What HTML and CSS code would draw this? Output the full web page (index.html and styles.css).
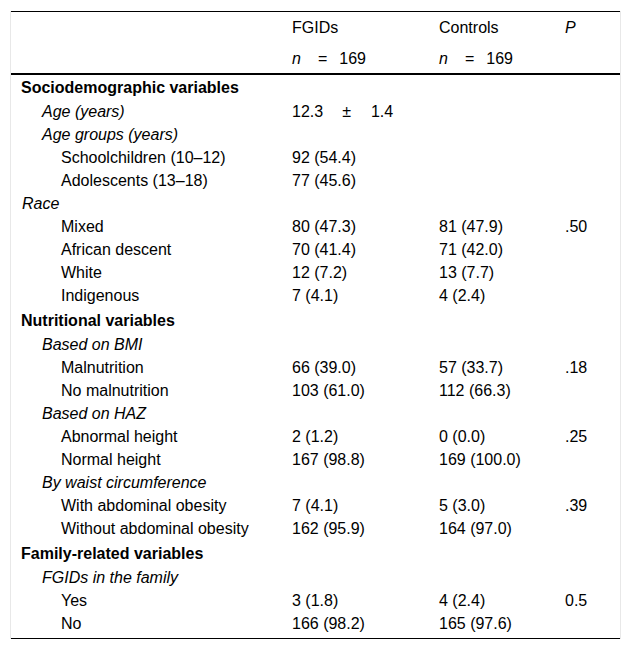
FILE: index.html
```html
<!DOCTYPE html>
<html lang="en">
<head>
<meta charset="utf-8">
<title>Table</title>
<link rel="stylesheet" href="styles.css">
</head>
<body>
<div class="frame">
<table class="data">
  <colgroup>
    <col class="c-label"><col class="c-fg"><col class="c-ct"><col class="c-p">
  </colgroup>
  <thead>
    <tr class="h1"><th></th><th>FGIDs</th><th>Controls</th><th><i>P</i></th></tr>
    <tr class="h2"><th></th><th><i>n</i><span class="op">=</span>169</th><th><i>n</i><span class="op">=</span>169</th><th></th></tr>
  </thead>
  <tbody>
    <tr class="sec"><td>Sociodemographic variables</td><td></td><td></td><td></td></tr>
    <tr><td class="l1"><i>Age (years)</i></td><td>12.3<span class="pm">±</span>1.4</td><td></td><td></td></tr>
    <tr><td class="l1"><i>Age groups (years)</i></td><td></td><td></td><td></td></tr>
    <tr><td class="l2">Schoolchildren (10–12)</td><td>92 (54.4)</td><td></td><td></td></tr>
    <tr><td class="l2">Adolescents (13–18)</td><td>77 (45.6)</td><td></td><td></td></tr>
    <tr><td class="l0"><i>Race</i></td><td></td><td></td><td></td></tr>
    <tr><td class="l2">Mixed</td><td>80 (47.3)</td><td>81 (47.9)</td><td>.50</td></tr>
    <tr><td class="l2">African descent</td><td>70 (41.4)</td><td>71 (42.0)</td><td></td></tr>
    <tr><td class="l2">White</td><td>12 (7.2)</td><td>13 (7.7)</td><td></td></tr>
    <tr><td class="l2">Indigenous</td><td>7 (4.1)</td><td>4 (2.4)</td><td></td></tr>
    <tr class="sec"><td>Nutritional variables</td><td></td><td></td><td></td></tr>
    <tr><td class="l1"><i>Based on BMI</i></td><td></td><td></td><td></td></tr>
    <tr><td class="l2">Malnutrition</td><td>66 (39.0)</td><td>57 (33.7)</td><td>.18</td></tr>
    <tr><td class="l2">No malnutrition</td><td>103 (61.0)</td><td>112 (66.3)</td><td></td></tr>
    <tr><td class="l1"><i>Based on HAZ</i></td><td></td><td></td><td></td></tr>
    <tr><td class="l2">Abnormal height</td><td>2 (1.2)</td><td>0 (0.0)</td><td>.25</td></tr>
    <tr><td class="l2">Normal height</td><td>167 (98.8)</td><td>169 (100.0)</td><td></td></tr>
    <tr><td class="l1"><i>By waist circumference</i></td><td></td><td></td><td></td></tr>
    <tr><td class="l2">With abdominal obesity</td><td>7 (4.1)</td><td>5 (3.0)</td><td>.39</td></tr>
    <tr><td class="l2">Without abdominal obesity</td><td>162 (95.9)</td><td>164 (97.0)</td><td></td></tr>
    <tr class="sec"><td>Family-related variables</td><td></td><td></td><td></td></tr>
    <tr><td class="l1"><i>FGIDs in the family</i></td><td></td><td></td><td></td></tr>
    <tr><td class="l2">Yes</td><td>3 (1.8)</td><td>4 (2.4)</td><td>0.5</td></tr>
    <tr><td class="l2">No</td><td>166 (98.2)</td><td>165 (97.6)</td><td></td></tr>
  </tbody>
</table>
</div>
</body>
</html>
```

FILE: styles.css
```css
html, body {
  margin: 0;
  padding: 0;
  background: #fff;
}
body {
  font-family: "Liberation Sans", Arial, sans-serif;
  font-size: 16px;
  color: #000;
}
.frame {
  margin: 11px 0 0 10px;
  width: 609px;
  border-left: 1px solid #e8e8e8;
  border-right: 1px solid #e8e8e8;
}
.data {
  width: 609px;
  border-collapse: collapse;
  table-layout: fixed;
}
.c-label { width: 271px; }
.c-fg { width: 147px; }
.c-ct { width: 126px; }
.c-p { width: 65px; }

.data th, .data td {
  text-align: left;
  font-weight: normal;
  line-height: 19px;
  padding: 1px 0 3px 10px;
  white-space: nowrap;
  vertical-align: top;
}
.data thead tr.h1 th {
  border-top: 1px solid #000;
  padding-top: 6px;
  padding-bottom: 5px;
}
.data thead tr.h2 th {
  padding-top: 7px;
  padding-bottom: 5px;
  border-bottom: 2px solid #000;
}
.data tbody tr:last-child td {
  padding-bottom: 5px;
  border-bottom: 1px solid #000;
}
.op { margin: 0 12px 0 17px; }
.pm { margin: 0 20px 0 19px; }

.data tr.sec td {
  font-weight: bold;
  padding-top: 3px;
  padding-bottom: 4px;
}
.data td.l0 { padding-left: 11px; }
.data td.l1 { padding-left: 31px; }
.data td.l2 { padding-left: 50px; }
```
